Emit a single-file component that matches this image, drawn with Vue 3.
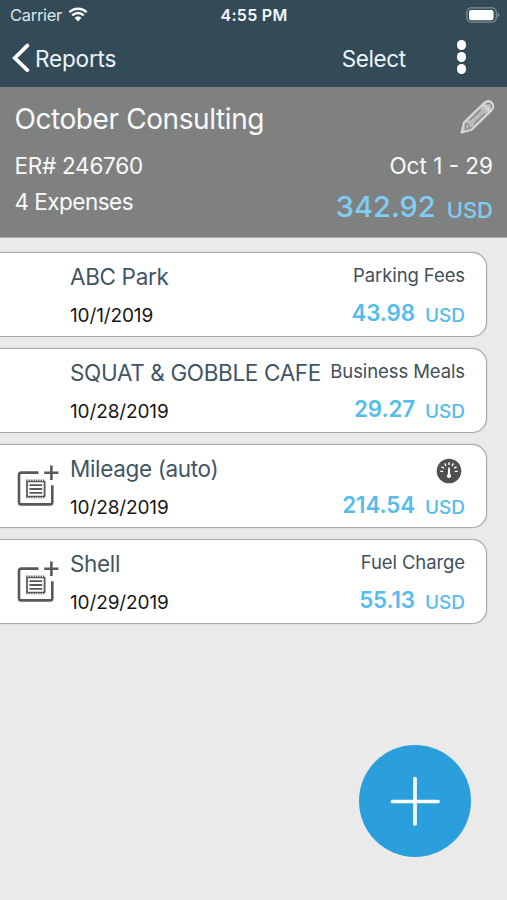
<template>
  <div class="screen">
    <header class="top-bar">
      <div class="status-bar">
        <div class="carrier">
          <span class="carrier-name">Carrier</span>
          <svg class="wifi" viewBox="0 0 20 15" width="20" height="15">
            <path d="M1.4 5.2a12.4 12.4 0 0 1 17.2 0" />
            <path d="M4.3 8.3a8.2 8.2 0 0 1 11.4 0" />
            <path class="wifi-dot" d="M6.6 10.9a5 5 0 0 1 6.8 0L10 14.4z" />
          </svg>
        </div>
        <span class="clock">4:55 PM</span>
        <svg class="battery" viewBox="0 0 34 16" width="34" height="16">
          <rect class="battery-case" x="0.9" y="0.8" width="29.4" height="14.4" rx="4.4" />
          <rect class="battery-fill" x="3" y="2.9" width="24.6" height="10.3" rx="2.3" />
          <path class="battery-tip" d="M31.7 5.6q1.8.9 1.8 2.4t-1.8 2.4z" />
        </svg>
      </div>
      <nav class="nav-row">
        <button class="nav-btn back">
          <svg viewBox="0 0 18 30" width="18" height="30">
            <path d="M15.3 2.6L2.8 15l12.5 12.2" />
          </svg>
          <span class="back-label">Reports</span>
        </button>
        <button class="nav-btn select">Select</button>
        <button class="nav-btn more"><i></i><i></i><i></i></button>
      </nav>
    </header>

    <section class="report">
      <div class="report-head">
        <h1 class="report-name">{{ report.name }}</h1>
        <svg class="pencil" viewBox="0 0 34 34" width="34" height="34">
          <path class="pencil-wood" d="M1.4 32.6L3.9 22.4 24.6 2.4q4.2-3 7.4.4t.2 7L11.6 29.8z" />
          <path class="pencil-band" d="M21.4 5.6l3.2-2.9 7 6.8-3.2 3.1z" />
          <path class="pencil-groove" d="M9.8 20.2L20.8 9.6M13.8 24.2L24.8 13.6" />
          <path class="pencil-groove thin" d="M5.6 23.6l2.6.8.8 2.6 2 .8-5.6 2.2z" />
          <path class="pencil-groove thin" d="M26.2 4.2q3-1.8 4.8.2t.2 4.4" />
          <path class="pencil-edge" d="M1.4 32.6L3.9 22.4 24.6 2.4q4.2-3 7.4.4t.2 7L11.6 29.8z" />
        </svg>
      </div>
      <div class="report-row">
        <span class="report-id">ER# {{ report.id }}</span>
        <span class="report-dates">{{ report.dates }}</span>
      </div>
      <div class="report-row">
        <span class="report-count">{{ expenses.length }} Expenses</span>
        <div class="total">
          <span class="total-value">{{ report.total }}</span>
          <span class="total-unit">USD</span>
        </div>
      </div>
    </section>

    <main class="expense-list">
      <article v-for="item in expenses" :key="item.merchant" class="expense">
        <div class="receipt">
          <svg v-if="item.addReceipt" viewBox="0 0 42 42" width="42" height="42">
            <path class="frame" d="M21.5 7.6H4.2Q2 7.6 2 9.8v27.4q0 2.2 2.2 2.2h28.9q2.2 0 2.2-2.2V20.3" />
            <path class="frame" d="M34.4.6v14.4M27.2 7.8h14.2" />
            <path class="paper" d="M10 16.4v15.2M27.6 16.4v15.2" />
            <path class="paper-edge" d="M9.2 15.2h19.2M9.2 32.6h19.2" />
            <path class="paper thin" d="M9.4 16.6h18.8M9.4 31.4h18.8" />
            <path class="paper" d="M12.4 20.2h12.8M12.4 24h12.8M12.4 27.8h12.8" />
          </svg>
        </div>
        <div class="expense-info">
          <div class="merchant">{{ item.merchant }}</div>
          <div class="date">{{ item.date }}</div>
        </div>
        <div class="expense-cost">
          <svg v-if="item.mileage" class="gauge" viewBox="0 0 26 26" width="26" height="26">
            <circle class="gauge-face" cx="13" cy="13" r="12.3" />
            <path class="ticks" d="M4.2 13.4h3M5.4 8.8L8 10.2M8.7 5.4l1.3 2.6M13 4.2v2.8M17.3 5.4L16 8M20.6 8.8L18 10.2M21.8 13.4h-3" />
            <path class="needle" d="M12.2 9.6h1.6l.4 7.4h-2.4z" />
            <circle class="needle" cx="13" cy="18" r="2.1" />
          </svg>
          <div v-else class="category">{{ item.category }}</div>
          <div class="amount">
            <span class="amount-value">{{ item.amount }}</span>
            <span class="amount-unit">USD</span>
          </div>
        </div>
      </article>
    </main>

    <button class="add-btn" aria-label="Add expense">
      <svg viewBox="0 0 50 50" width="50" height="50">
        <path d="M25 2.5v45.5M2.5 25.5h45.5" />
      </svg>
    </button>
  </div>
</template>

<script setup>
const report = {
  name: 'October Consulting',
  id: '246760',
  dates: 'Oct 1 - 29',
  total: '342.92'
}

const expenses = [
  { merchant: 'ABC Park', date: '10/1/2019', category: 'Parking Fees', amount: '43.98' },
  { merchant: 'SQUAT & GOBBLE CAFE', date: '10/28/2019', category: 'Business Meals', amount: '29.27' },
  { merchant: 'Mileage (auto)', date: '10/28/2019', mileage: true, amount: '214.54', addReceipt: true },
  { merchant: 'Shell', date: '10/29/2019', category: 'Fuel Charge', amount: '55.13', addReceipt: true }
]
</script>

<style>
body {
  margin: 0;
  background: #eaeaea;
}
</style>

<style scoped>
.screen {
  width: 507px;
  height: 900px;
  box-sizing: border-box;
  display: flex;
  flex-direction: column;
  background: #eaeaea;
  font-family: Inter, sans-serif;
  white-space: nowrap;
  overflow: hidden;
}
button {
  border: none;
  padding: 0;
  margin: 0;
  font-family: inherit;
  cursor: pointer;
}
svg {
  display: block;
  fill: none;
}
.top-bar {
  height: 87px;
  background: #334a57;
  color: #f4f8fa;
}
.status-bar {
  display: grid;
  grid-template-columns: 1fr auto 1fr;
  align-items: center;
  height: 29px;
  padding: 0 7px 1px 10px;
}
.carrier {
  display: flex;
  align-items: center;
  gap: 6px;
}
.carrier-name {
  font-size: 16.5px;
  letter-spacing: -0.3px;
  color: #dde4e8;
}
.wifi path {
  stroke: #fff;
  stroke-width: 2.5;
}
.wifi .wifi-dot {
  fill: #fff;
  stroke: none;
}
.clock {
  margin-right: 2px;
  font-size: 16px;
  font-weight: 600;
  letter-spacing: 0.3px;
}
.battery {
  justify-self: end;
}
.battery-case {
  stroke: #82919a;
  stroke-width: 1.3;
}
.battery-fill {
  fill: #fff;
}
.battery-tip {
  fill: #82919a;
}
.nav-row {
  display: flex;
  align-items: center;
  height: 56px;
  padding: 0 41px 0 12px;
}
.nav-btn {
  background: none;
  color: #edf4f8;
  font-size: 22.5px;
}
.back {
  display: flex;
  align-items: center;
  gap: 5px;
  margin-right: auto;
  letter-spacing: -0.15px;
}
.select {
  letter-spacing: -0.4px;
}
.back path {
  stroke: #fff;
  stroke-width: 3.8;
  stroke-linecap: round;
}
.more {
  display: flex;
  flex-direction: column;
  gap: 2.6px;
  margin-left: 51px;
  margin-top: -2px;
}
.more i {
  width: 9.4px;
  height: 9.4px;
  border-radius: 50%;
  background: #fff;
}
.report {
  height: 151px;
  box-sizing: border-box;
  padding: 11px 14px 0 14.4px;
  background: #7f8180;
  border-bottom: 1px solid #b0b1b1;
  color: #fafafa;
}
.report-head,
.report-row {
  display: flex;
  justify-content: space-between;
}
.report-head {
  height: 48px;
}
.report-name {
  margin: 0;
  font-size: 28px;
  font-weight: 400;
  line-height: 43px;
  letter-spacing: -0.4px;
}
.pencil {
  margin: 2px -1px 0 0;
}
.pencil-wood {
  fill: #b9bbba;
}
.pencil-band {
  fill: #cfd1d0;
}
.pencil-groove {
  stroke: #8b8d8c;
  stroke-width: 1.5;
}
.pencil-groove.thin {
  stroke-width: 1.3;
}
.pencil-edge {
  stroke: #dcdedd;
  stroke-width: 1.7;
  stroke-linejoin: round;
}
.report-row {
  height: 36px;
  line-height: 40px;
  font-size: 22.5px;
}
.report-id {
  letter-spacing: -0.25px;
}
.report-count {
  letter-spacing: -0.5px;
}
.total {
  display: flex;
  gap: 11px;
  color: #7fccf5;
}
.total-value {
  font-size: 29px;
  font-weight: 550;
  line-height: 49px;
}
.total-unit {
  font-size: 22px;
  font-weight: 500;
  line-height: 56px;
}
.expense-list {
  display: flex;
  flex-direction: column;
  gap: 11px;
  padding: 14.4px 20px 0 0;
}
.expense {
  display: grid;
  grid-template-columns: 70px 1fr auto;
  height: 84.7px;
  box-sizing: border-box;
  background: #fff;
  border: 1px solid #a9a9a9;
  border-left: none;
  border-radius: 0 15px 15px 0;
  padding-right: 21px;
  box-shadow: 0 0 1px #999;
}
.receipt {
  padding: 20.6px 0 0 17.2px;
}
.frame {
  stroke: #595959;
  stroke-width: 2.6;
}
.paper {
  stroke: #595959;
  stroke-width: 1.8;
}
.paper.thin {
  stroke-width: 1.2;
}
.paper-edge {
  stroke: #595959;
  stroke-width: 1.5;
  stroke-dasharray: 1.4 1;
}
.merchant {
  margin-top: 4px;
  font-size: 22.5px;
  line-height: 40px;
  letter-spacing: -0.35px;
  color: #415663;
}
.date {
  font-size: 19px;
  line-height: 38px;
  letter-spacing: -0.12px;
  color: #161616;
}
.expense-info {
  width: 0;
}
.expense-cost {
  display: flex;
  flex-direction: column;
  align-items: flex-end;
}
.category {
  margin-top: 4px;
  height: 36px;
  font-size: 18.5px;
  line-height: 36px;
  letter-spacing: -0.1px;
  color: #425058;
}
.gauge {
  margin: 13px 3px 1px 0;
}
.gauge-face {
  fill: #505050;
}
.ticks {
  stroke: #fff;
  stroke-width: 1.4;
}
.needle {
  fill: #fff;
}
.amount {
  display: flex;
  gap: 10px;
  color: #56bcec;
}
.amount-value {
  font-size: 22.3px;
  font-weight: 600;
  line-height: 39px;
  letter-spacing: -0.1px;
}
.amount-unit {
  font-size: 19px;
  font-weight: 500;
  line-height: 45px;
}
.add-btn {
  display: flex;
  align-items: center;
  justify-content: center;
  align-self: flex-end;
  width: 112px;
  height: 112px;
  margin: auto 36px 42.8px 0;
  flex: none;
  border-radius: 50%;
  background: #2a9fdb;
}
.add-btn path {
  stroke: #fff;
  stroke-width: 3.7;
  stroke-linecap: round;
}
</style>
